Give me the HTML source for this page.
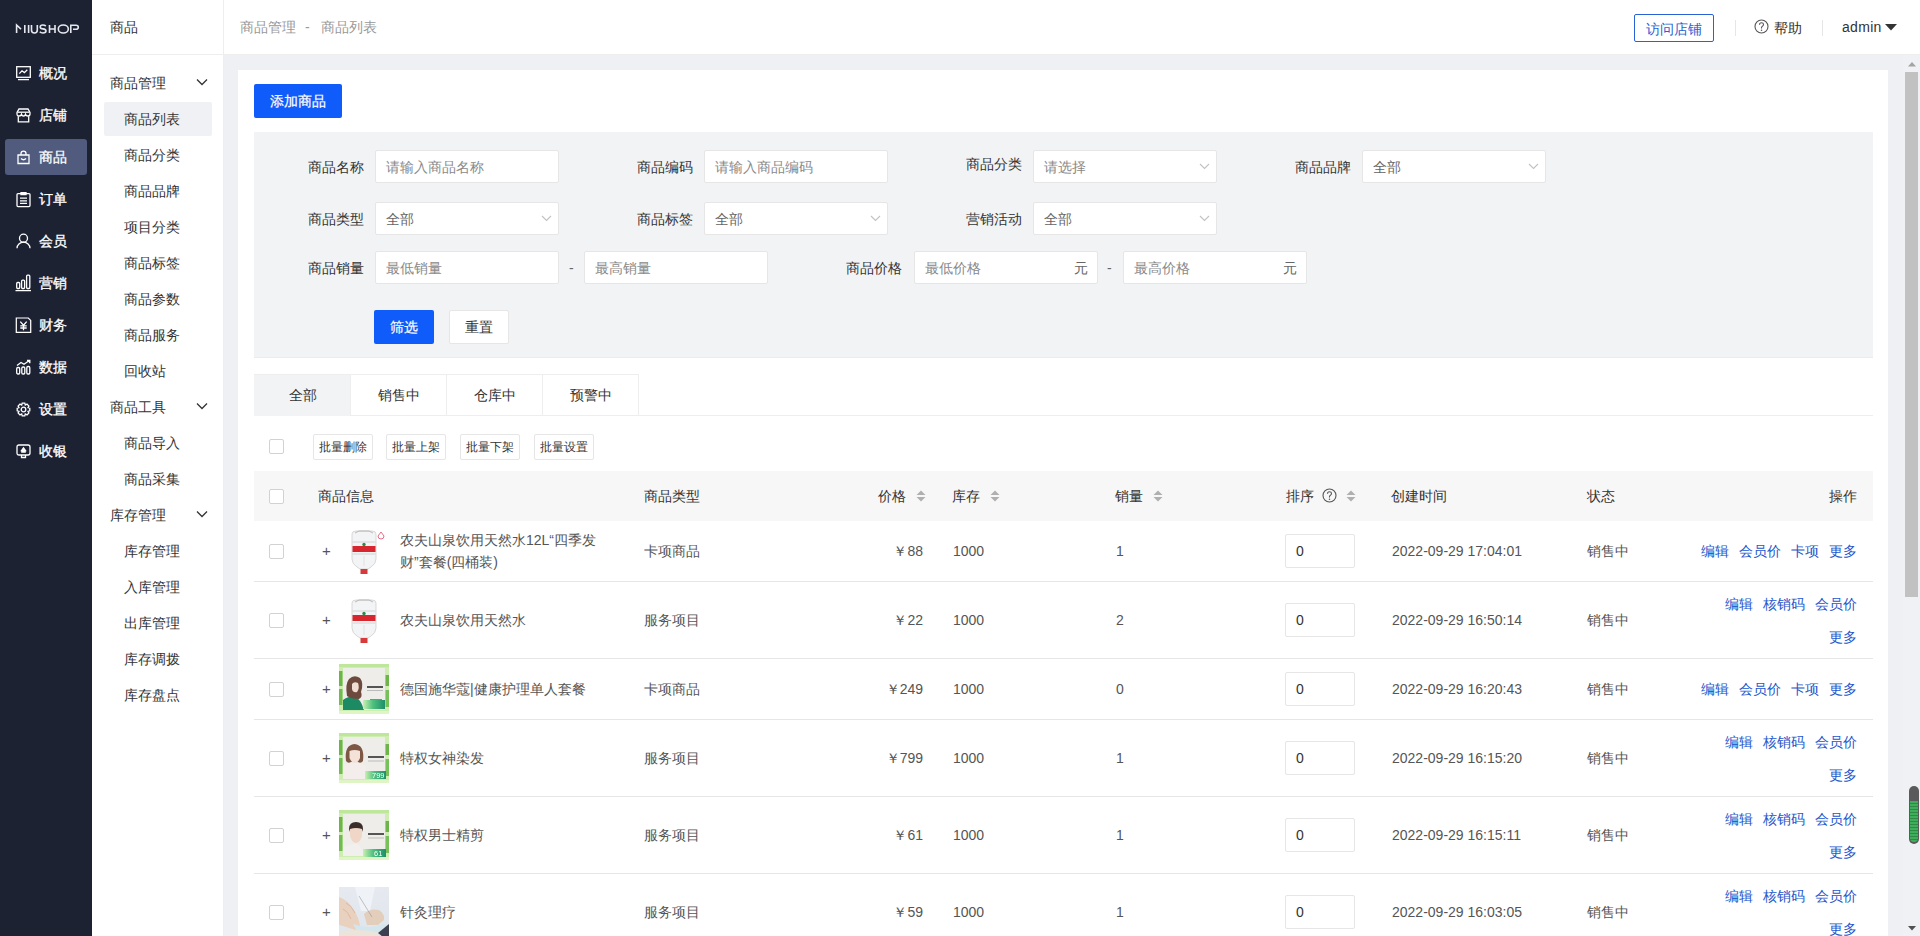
<!DOCTYPE html><html><head><meta charset="utf-8"><style>
html,body{margin:0;padding:0;width:1920px;height:936px;overflow:hidden;background:#fff;font-family:"Liberation Sans",sans-serif;}
.t{position:absolute;white-space:nowrap;}
.b{position:absolute;box-sizing:border-box;}
svg{position:absolute;overflow:visible;}
</style></head><body>
<div class="b" style="left:0px;top:0px;width:92px;height:936px;background:#1d2233"></div>
<svg style="left:15px;top:24px" width="64" height="10" viewBox="0 0 64 10"><g fill="none" stroke="#e6e8ef" stroke-width="1.6"><path d="M1.6 9V1L6 5.2"/><path d="M9.8 1V9"/><path d="M13.6 1V9"/><path d="M16.5 1V6Q16.5 9 19.4 9Q22.3 9 22.3 6V1"/><path d="M30.8 2.1Q29.8 1 27.8 1Q25.2 1 25.2 2.9Q25.2 4.6 28 4.9Q31 5.3 31 7.1Q31 9 28 9Q25.8 9 24.8 7.8"/><path d="M34.5 1V9M34.5 5H40M40 1V9"/><ellipse cx="48.3" cy="5" rx="5" ry="4"/><path d="M55.8 9V1.3H61Q63.3 1.3 63.3 3.3Q63.3 5.3 61 5.3H58"/></g></svg>
<div class="t " style="left:39px;top:63px;font-size:14px;line-height:20px;color:#fff;-webkit-text-stroke:0.3px #fff">概况</div>
<div class="t " style="left:39px;top:105px;font-size:14px;line-height:20px;color:#fff;-webkit-text-stroke:0.3px #fff">店铺</div>
<div class="b" style="left:5px;top:139px;width:82px;height:36px;background:#505b7e;border-radius:3px"></div>
<div class="t " style="left:39px;top:147px;font-size:14px;line-height:20px;color:#fff;-webkit-text-stroke:0.3px #fff">商品</div>
<div class="t " style="left:39px;top:189px;font-size:14px;line-height:20px;color:#fff;-webkit-text-stroke:0.3px #fff">订单</div>
<div class="t " style="left:39px;top:231px;font-size:14px;line-height:20px;color:#fff;-webkit-text-stroke:0.3px #fff">会员</div>
<div class="t " style="left:39px;top:273px;font-size:14px;line-height:20px;color:#fff;-webkit-text-stroke:0.3px #fff">营销</div>
<div class="t " style="left:39px;top:315px;font-size:14px;line-height:20px;color:#fff;-webkit-text-stroke:0.3px #fff">财务</div>
<div class="t " style="left:39px;top:357px;font-size:14px;line-height:20px;color:#fff;-webkit-text-stroke:0.3px #fff">数据</div>
<div class="t " style="left:39px;top:399px;font-size:14px;line-height:20px;color:#fff;-webkit-text-stroke:0.3px #fff">设置</div>
<div class="t " style="left:39px;top:441px;font-size:14px;line-height:20px;color:#fff;-webkit-text-stroke:0.3px #fff">收银</div>
<svg style="left:16px;top:66px" width="15" height="15" viewBox="0 0 15 15"><g fill="none" stroke="#fff" stroke-width="1.3"><rect x="0.7" y="0.7" width="13.6" height="10.6"/><path d="M3.3 7.6L6 4.8L8.4 6.6L11.3 3.8"/><path d="M2 13.6H13"/></g></svg>
<svg style="left:16px;top:108px" width="15" height="15" viewBox="0 0 15 15"><g fill="none" stroke="#fff" stroke-width="1.3"><path d="M3 1H12L14 4.5V6Q14 8 12 8Q10 8 9.5 6.3Q9 8 7.5 8Q6 8 5.5 6.3Q5 8 3 8Q1 8 1 6V4.5Z"/><path d="M2.3 8.2V13.8H12.7V8.2"/><path d="M1.5 4.2H13.5"/></g></svg>
<svg style="left:16px;top:150px" width="15" height="15" viewBox="0 0 15 15"><g fill="none" stroke="#fff" stroke-width="1.3"><path d="M2 5H13V13.5H2Z"/><path d="M5 5V3.5Q5 1.2 7.5 1.2Q10 1.2 10 3.5V5"/><path d="M5 8.5Q7.5 11 10 8.5"/></g></svg>
<svg style="left:16px;top:192px" width="15" height="15" viewBox="0 0 15 15"><g fill="none" stroke="#fff" stroke-width="1.3"><rect x="1" y="1.6" width="13" height="13" rx="1"/><path d="M5 0.6H10V2.6H5Z M4 6.2H11M4 8.8H11M4 11.4H11"/></g></svg>
<svg style="left:16px;top:234px" width="15" height="15" viewBox="0 0 15 15"><g fill="none" stroke="#fff" stroke-width="1.3"><circle cx="7.5" cy="4.2" r="4"/><path d="M1 14.2A6.5 6 0 0 1 14 14.2"/></g></svg>
<svg style="left:16px;top:276px" width="15" height="15" viewBox="0 0 15 15"><g fill="none" stroke="#fff" stroke-width="1.3"><rect x="0.7" y="6.5" width="3" height="6" rx="1"/><rect x="5.6" y="4.2" width="3" height="8.3" rx="1"/><rect x="10.6" y="-0.8" width="3.2" height="13.3" rx="1"/><path d="M-0.5 14.6H15"/></g></svg>
<svg style="left:16px;top:318px" width="15" height="15" viewBox="0 0 15 15"><g fill="none" stroke="#fff" stroke-width="1.3"><path d="M0 0H12.5L15 2.5V15H0Z" transform="translate(0.3 0) scale(0.96)"/><path d="M4.3 3.6L7.5 7.2L10.7 3.6M7.5 7.2V12.2M4.3 7.8H10.7M4.3 10H10.7"/></g></svg>
<svg style="left:16px;top:360px" width="15" height="15" viewBox="0 0 15 15"><g fill="none" stroke="#fff" stroke-width="1.3"><rect x="0.7" y="7.5" width="3" height="6.5" rx="1.2"/><rect x="5.8" y="7" width="3" height="7" rx="1.2"/><rect x="10.8" y="6.5" width="3" height="7.5" rx="1.2"/><path d="M1 5.5L5 2.5L8 4.3L13 0.8"/><path d="M11 0.5H13.8V3.3" fill="#fff"/></g></svg>
<svg style="left:16px;top:402px" width="15" height="15" viewBox="0 0 15 15"><g fill="none" stroke="#fff" stroke-width="1.3"><circle cx="7.5" cy="7.5" r="2.3"/><path d="M6.2 1.2H8.8L9.3 3L11 2.1L12.9 4L12 5.7L13.8 6.2V8.8L12 9.3L12.9 11L11 12.9L9.3 12L8.8 13.8H6.2L5.7 12L4 12.9L2.1 11L3 9.3L1.2 8.8V6.2L3 5.7L2.1 4L4 2.1L5.7 3Z"/></g></svg>
<svg style="left:16px;top:444px" width="15" height="15" viewBox="0 0 15 15"><g fill="none" stroke="#fff" stroke-width="1.3"><path d="M3 1H12Q14 1 14 3V9Q14 11 12 11H3Q1 11 1 9V3Q1 1 3 1Z"/><path d="M5.5 11V13.5H9.5V11"/><path d="M5.2 8H9.8M7.5 3.8L5.5 6.5H9.5Z" fill="#fff"/></g></svg>
<div class="b" style="left:92px;top:0px;width:132px;height:936px;background:#fff;border-right:1px solid #eee"></div>
<div class="t " style="left:110px;top:17px;font-size:14px;line-height:20px;color:#333;">商品</div>
<div class="b" style="left:92px;top:54px;width:132px;height:1px;background:#eee"></div>
<div class="t " style="left:110px;top:73px;font-size:14px;line-height:20px;color:#333;">商品管理</div>
<svg style="left:196px;top:78px" width="12" height="8" viewBox="0 0 12 8"><path d="M1 1.5L6 6.5L11 1.5" fill="none" stroke="#333" stroke-width="1.3"/></svg>
<div class="b" style="left:104px;top:102px;width:108px;height:34px;background:#f0f1f4;border-radius:2px"></div>
<div class="t " style="left:124px;top:109px;font-size:14px;line-height:20px;color:#333;">商品列表</div>
<div class="t " style="left:124px;top:145px;font-size:14px;line-height:20px;color:#333;">商品分类</div>
<div class="t " style="left:124px;top:181px;font-size:14px;line-height:20px;color:#333;">商品品牌</div>
<div class="t " style="left:124px;top:217px;font-size:14px;line-height:20px;color:#333;">项目分类</div>
<div class="t " style="left:124px;top:253px;font-size:14px;line-height:20px;color:#333;">商品标签</div>
<div class="t " style="left:124px;top:289px;font-size:14px;line-height:20px;color:#333;">商品参数</div>
<div class="t " style="left:124px;top:325px;font-size:14px;line-height:20px;color:#333;">商品服务</div>
<div class="t " style="left:124px;top:361px;font-size:14px;line-height:20px;color:#333;">回收站</div>
<div class="t " style="left:110px;top:397px;font-size:14px;line-height:20px;color:#333;">商品工具</div>
<svg style="left:196px;top:402px" width="12" height="8" viewBox="0 0 12 8"><path d="M1 1.5L6 6.5L11 1.5" fill="none" stroke="#333" stroke-width="1.3"/></svg>
<div class="t " style="left:124px;top:433px;font-size:14px;line-height:20px;color:#333;">商品导入</div>
<div class="t " style="left:124px;top:469px;font-size:14px;line-height:20px;color:#333;">商品采集</div>
<div class="t " style="left:110px;top:505px;font-size:14px;line-height:20px;color:#333;">库存管理</div>
<svg style="left:196px;top:510px" width="12" height="8" viewBox="0 0 12 8"><path d="M1 1.5L6 6.5L11 1.5" fill="none" stroke="#333" stroke-width="1.3"/></svg>
<div class="t " style="left:124px;top:541px;font-size:14px;line-height:20px;color:#333;">库存管理</div>
<div class="t " style="left:124px;top:577px;font-size:14px;line-height:20px;color:#333;">入库管理</div>
<div class="t " style="left:124px;top:613px;font-size:14px;line-height:20px;color:#333;">出库管理</div>
<div class="t " style="left:124px;top:649px;font-size:14px;line-height:20px;color:#333;">库存调拨</div>
<div class="t " style="left:124px;top:685px;font-size:14px;line-height:20px;color:#333;">库存盘点</div>
<div class="b" style="left:224px;top:0px;width:1696px;height:54px;background:#fff"></div>
<div class="b" style="left:224px;top:54px;width:1696px;height:1px;background:#eee"></div>
<div class="t " style="left:240px;top:17px;font-size:14px;line-height:20px;color:#999;">商品管理</div>
<div class="t " style="left:305px;top:17px;font-size:14px;line-height:20px;color:#999;">-</div>
<div class="t " style="left:321px;top:17px;font-size:14px;line-height:20px;color:#999;">商品列表</div>
<div class="b" style="left:1634px;top:14px;width:80px;height:28px;border:1px solid #2a62d6;border-radius:2px"></div>
<div class="t " style="left:1646px;top:19px;font-size:14px;line-height:20px;color:#2a5fd0;">访问店铺</div>
<div class="b" style="left:1735px;top:20px;width:1px;height:16px;background:#e6e6e6"></div>
<svg style="left:1754px;top:19px" width="15" height="15" viewBox="0 0 15 15"><circle cx="7.5" cy="7.5" r="6.5" fill="none" stroke="#555" stroke-width="1.1"/><path d="M5.5 5.8Q5.5 3.8 7.5 3.8Q9.5 3.8 9.5 5.6Q9.5 6.8 8.2 7.4Q7.5 7.8 7.5 8.8V9.5" fill="none" stroke="#555" stroke-width="1.1"/><circle cx="7.5" cy="11.2" r="0.75" fill="#555"/></svg>
<div class="t " style="left:1774px;top:18px;font-size:14px;line-height:20px;color:#333;">帮助</div>
<div class="b" style="left:1822px;top:20px;width:1px;height:16px;background:#e6e6e6"></div>
<div class="t " style="left:1842px;top:17px;font-size:14px;line-height:20px;color:#333;letter-spacing:0.3px">admin</div>
<svg style="left:1885px;top:24px" width="12" height="7" viewBox="0 0 12 7"><path d="M0 0H12L6 6.5Z" fill="#333"/></svg>
<div class="b" style="left:224px;top:55px;width:1696px;height:881px;background:#eff0f4"></div>
<div class="b" style="left:238px;top:70px;width:1650px;height:866px;background:#fff"></div>
<div class="b" style="left:1903px;top:55px;width:17px;height:881px;background:#f0f1f4"></div>
<div class="b" style="left:1905px;top:72px;width:13px;height:525px;background:#c1c1c1"></div>
<svg style="left:1908px;top:62px" width="8" height="5" viewBox="0 0 8 5"><path d="M0 4.5H8L4 0Z" fill="#a3a3a3"/></svg>
<svg style="left:1908px;top:926px" width="8" height="5" viewBox="0 0 8 5"><path d="M0 0H8L4 4.5Z" fill="#505050"/></svg>
<div class="b" style="left:1909px;top:786px;width:10px;height:58px;background:#5a5a5a;border-radius:5px"></div>
<div class="b" style="left:1910px;top:801px;width:8px;height:41px;background:repeating-linear-gradient(#3fae5a 0 2px,#2f8a45 2px 3px);border-radius:0 0 4px 4px"></div>
<div class="b" style="left:254px;top:84px;width:88px;height:34px;background:#105cfb;border-radius:2px"></div>
<div class="t " style="left:270px;top:91px;font-size:14px;line-height:20px;color:#fff;-webkit-text-stroke:0.2px #fff">添加商品</div>
<div class="b" style="left:254px;top:132px;width:1619px;height:226px;background:#f2f3f5;border-bottom:1px solid #ebecef"></div>
<div class="t " style="left:308px;top:157px;font-size:14px;line-height:20px;color:#333;">商品名称</div>
<div class="b" style="left:375px;top:150px;width:184px;height:33px;background:#fff;border:1px solid #e6e6e6;border-radius:2px"></div>
<div class="t " style="left:386px;top:157px;font-size:14px;line-height:20px;color:#8a8a8a;">请输入商品名称</div>
<div class="t " style="left:637px;top:157px;font-size:14px;line-height:20px;color:#333;">商品编码</div>
<div class="b" style="left:704px;top:150px;width:184px;height:33px;background:#fff;border:1px solid #e6e6e6;border-radius:2px"></div>
<div class="t " style="left:715px;top:157px;font-size:14px;line-height:20px;color:#8a8a8a;">请输入商品编码</div>
<div class="t " style="left:966px;top:154px;font-size:14px;line-height:20px;color:#333;">商品分类</div>
<div class="b" style="left:1033px;top:150px;width:184px;height:33px;background:#fff;border:1px solid #e6e6e6;border-radius:2px"></div>
<div class="t " style="left:1044px;top:157px;font-size:14px;line-height:20px;color:#8a8a8a;">请选择</div>
<svg style="left:1199px;top:163px" width="11" height="7" viewBox="0 0 11 7"><path d="M1 1L5.5 5.5L10 1" fill="none" stroke="#c2c2c2" stroke-width="1.1"/></svg>
<div class="t " style="left:1295px;top:157px;font-size:14px;line-height:20px;color:#333;">商品品牌</div>
<div class="b" style="left:1362px;top:150px;width:184px;height:33px;background:#fff;border:1px solid #e6e6e6;border-radius:2px"></div>
<div class="t " style="left:1373px;top:157px;font-size:14px;line-height:20px;color:#666;">全部</div>
<svg style="left:1528px;top:163px" width="11" height="7" viewBox="0 0 11 7"><path d="M1 1L5.5 5.5L10 1" fill="none" stroke="#c2c2c2" stroke-width="1.1"/></svg>
<div class="t " style="left:308px;top:209px;font-size:14px;line-height:20px;color:#333;">商品类型</div>
<div class="b" style="left:375px;top:202px;width:184px;height:33px;background:#fff;border:1px solid #e6e6e6;border-radius:2px"></div>
<div class="t " style="left:386px;top:209px;font-size:14px;line-height:20px;color:#666;">全部</div>
<svg style="left:541px;top:215px" width="11" height="7" viewBox="0 0 11 7"><path d="M1 1L5.5 5.5L10 1" fill="none" stroke="#c2c2c2" stroke-width="1.1"/></svg>
<div class="t " style="left:637px;top:209px;font-size:14px;line-height:20px;color:#333;">商品标签</div>
<div class="b" style="left:704px;top:202px;width:184px;height:33px;background:#fff;border:1px solid #e6e6e6;border-radius:2px"></div>
<div class="t " style="left:715px;top:209px;font-size:14px;line-height:20px;color:#666;">全部</div>
<svg style="left:870px;top:215px" width="11" height="7" viewBox="0 0 11 7"><path d="M1 1L5.5 5.5L10 1" fill="none" stroke="#c2c2c2" stroke-width="1.1"/></svg>
<div class="t " style="left:966px;top:209px;font-size:14px;line-height:20px;color:#333;">营销活动</div>
<div class="b" style="left:1033px;top:202px;width:184px;height:33px;background:#fff;border:1px solid #e6e6e6;border-radius:2px"></div>
<div class="t " style="left:1044px;top:209px;font-size:14px;line-height:20px;color:#666;">全部</div>
<svg style="left:1199px;top:215px" width="11" height="7" viewBox="0 0 11 7"><path d="M1 1L5.5 5.5L10 1" fill="none" stroke="#c2c2c2" stroke-width="1.1"/></svg>
<div class="t " style="left:308px;top:258px;font-size:14px;line-height:20px;color:#333;">商品销量</div>
<div class="b" style="left:375px;top:251px;width:184px;height:33px;background:#fff;border:1px solid #e6e6e6;border-radius:2px"></div>
<div class="t " style="left:386px;top:258px;font-size:14px;line-height:20px;color:#8a8a8a;">最低销量</div>
<div class="t " style="left:569px;top:258px;font-size:14px;line-height:20px;color:#666;">-</div>
<div class="b" style="left:584px;top:251px;width:184px;height:33px;background:#fff;border:1px solid #e6e6e6;border-radius:2px"></div>
<div class="t " style="left:595px;top:258px;font-size:14px;line-height:20px;color:#8a8a8a;">最高销量</div>
<div class="t " style="left:846px;top:258px;font-size:14px;line-height:20px;color:#333;">商品价格</div>
<div class="b" style="left:914px;top:251px;width:184px;height:33px;background:#fff;border:1px solid #e6e6e6;border-radius:2px"></div>
<div class="t " style="left:925px;top:258px;font-size:14px;line-height:20px;color:#8a8a8a;">最低价格</div>
<div class="t " style="left:1074px;top:258px;font-size:14px;line-height:20px;color:#666;">元</div>
<div class="t " style="left:1107px;top:258px;font-size:14px;line-height:20px;color:#666;">-</div>
<div class="b" style="left:1123px;top:251px;width:184px;height:33px;background:#fff;border:1px solid #e6e6e6;border-radius:2px"></div>
<div class="t " style="left:1134px;top:258px;font-size:14px;line-height:20px;color:#8a8a8a;">最高价格</div>
<div class="t " style="left:1283px;top:258px;font-size:14px;line-height:20px;color:#666;">元</div>
<div class="b" style="left:374px;top:310px;width:60px;height:34px;background:#105cfb;border-radius:2px"></div>
<div class="t " style="left:390px;top:317px;font-size:14px;line-height:20px;color:#fff;-webkit-text-stroke:0.2px #fff">筛选</div>
<div class="b" style="left:449px;top:310px;width:60px;height:34px;background:#fff;border:1px solid #e6e6e6;border-radius:2px"></div>
<div class="t " style="left:465px;top:317px;font-size:14px;line-height:20px;color:#333;">重置</div>
<div class="b" style="left:254px;top:415px;width:1619px;height:1px;background:#eee"></div>
<div class="b" style="left:254px;top:374px;width:385px;height:1px;background:#eee"></div>
<div class="b" style="left:254px;top:375px;width:96px;height:41px;background:#f2f3f5"></div>
<div class="b" style="left:350px;top:374px;width:1px;height:41px;background:#eee"></div>
<div class="b" style="left:446px;top:374px;width:1px;height:41px;background:#eee"></div>
<div class="b" style="left:542px;top:374px;width:1px;height:41px;background:#eee"></div>
<div class="b" style="left:638px;top:374px;width:1px;height:41px;background:#eee"></div>
<div class="t " style="left:289px;top:385px;font-size:14px;line-height:20px;color:#333;">全部</div>
<div class="t " style="left:378px;top:385px;font-size:14px;line-height:20px;color:#333;">销售中</div>
<div class="t " style="left:474px;top:385px;font-size:14px;line-height:20px;color:#333;">仓库中</div>
<div class="t " style="left:570px;top:385px;font-size:14px;line-height:20px;color:#333;">预警中</div>
<div class="b" style="left:269px;top:439px;width:15px;height:15px;background:#fff;border:1px solid #d2d2d2;border-radius:2px"></div>
<div class="b" style="left:313px;top:434px;width:60px;height:26px;background:#fff;border:1px solid #e6e6e6;border-radius:2px"></div>
<div class="t " style="left:319px;top:437px;font-size:12px;line-height:20px;color:#333;">批量删除</div>
<div class="b" style="left:386px;top:434px;width:60px;height:26px;background:#fff;border:1px solid #e6e6e6;border-radius:2px"></div>
<div class="t " style="left:392px;top:437px;font-size:12px;line-height:20px;color:#333;">批量上架</div>
<div class="b" style="left:460px;top:434px;width:60px;height:26px;background:#fff;border:1px solid #e6e6e6;border-radius:2px"></div>
<div class="t " style="left:466px;top:437px;font-size:12px;line-height:20px;color:#333;">批量下架</div>
<div class="b" style="left:534px;top:434px;width:60px;height:26px;background:#fff;border:1px solid #e6e6e6;border-radius:2px"></div>
<div class="t " style="left:540px;top:437px;font-size:12px;line-height:20px;color:#333;">批量设置</div>
<div class="b" style="left:254px;top:471px;width:1619px;height:50px;background:#f7f7f7"></div>
<div class="b" style="left:269px;top:489px;width:15px;height:15px;background:#fff;border:1px solid #d2d2d2;border-radius:2px"></div>
<div class="t " style="left:318px;top:486px;font-size:14px;line-height:20px;color:#333;">商品信息</div>
<div class="t " style="left:644px;top:486px;font-size:14px;line-height:20px;color:#333;">商品类型</div>
<div class="t " style="left:878px;top:486px;font-size:14px;line-height:20px;color:#333;">价格</div>
<svg style="left:916px;top:490px" width="10" height="12" viewBox="0 0 10 12"><path d="M5 0.5L9.5 5H0.5Z M5 11.5L9.5 7H0.5Z" fill="#b0b0b0"/></svg>
<div class="t " style="left:952px;top:486px;font-size:14px;line-height:20px;color:#333;">库存</div>
<svg style="left:990px;top:490px" width="10" height="12" viewBox="0 0 10 12"><path d="M5 0.5L9.5 5H0.5Z M5 11.5L9.5 7H0.5Z" fill="#b0b0b0"/></svg>
<div class="t " style="left:1115px;top:486px;font-size:14px;line-height:20px;color:#333;">销量</div>
<svg style="left:1153px;top:490px" width="10" height="12" viewBox="0 0 10 12"><path d="M5 0.5L9.5 5H0.5Z M5 11.5L9.5 7H0.5Z" fill="#b0b0b0"/></svg>
<div class="t " style="left:1286px;top:486px;font-size:14px;line-height:20px;color:#333;">排序</div>
<svg style="left:1322px;top:488px" width="15" height="15" viewBox="0 0 15 15"><circle cx="7.5" cy="7.5" r="6.5" fill="none" stroke="#555" stroke-width="1.1"/><path d="M5.5 5.8Q5.5 3.8 7.5 3.8Q9.5 3.8 9.5 5.6Q9.5 6.8 8.2 7.4Q7.5 7.8 7.5 8.8V9.5" fill="none" stroke="#555" stroke-width="1.1"/><circle cx="7.5" cy="11.2" r="0.75" fill="#555"/></svg>
<svg style="left:1346px;top:490px" width="10" height="12" viewBox="0 0 10 12"><path d="M5 0.5L9.5 5H0.5Z M5 11.5L9.5 7H0.5Z" fill="#b0b0b0"/></svg>
<div class="t " style="left:1391px;top:486px;font-size:14px;line-height:20px;color:#333;">创建时间</div>
<div class="t " style="left:1587px;top:486px;font-size:14px;line-height:20px;color:#333;">状态</div>
<div class="t" style="right:63px;top:486px;font-size:14px;line-height:20px;color:#333;">操作</div>
<div class="b" style="left:254px;top:581px;width:1619px;height:1px;background:#e6e6e6"></div>
<div class="b" style="left:269px;top:544px;width:15px;height:15px;background:#fff;border:1px solid #d2d2d2;border-radius:2px"></div>
<div class="t " style="left:322px;top:541px;font-size:15px;line-height:20px;color:#555;">+</div>
<svg style="left:339px;top:526px" width="50" height="50" viewBox="0 0 50 50"><path d="M13 8Q13 5 17 5H33Q37 5 37 8V33Q37 38 32 41L29 43H21L18 41Q13 38 13 33Z" fill="#f3f4f5" stroke="#cfcfcf" stroke-width="0.8"/><path d="M16 7L20 5H30L34 7" fill="none" stroke="#aaa" stroke-width="0.8"/><rect x="13.5" y="20" width="23" height="6" fill="#d8262f"/><circle cx="25" cy="18.5" r="1.7" fill="#2a8a4a"/><rect x="21.5" y="43" width="7" height="5" fill="#d63a3a"/><path d="M13.5 16H36.5M13.5 28H36.5" stroke="#ccc" stroke-width="0.8"/><path d="M25 30V40" stroke="#ddd" stroke-width="0.8"/><path d="M42 6L45 10Q45 13 42 13Q39 13 39 10Z" fill="none" stroke="#e35a7a" stroke-width="0.9"/></svg>
<div class="t " style="left:400px;top:530px;font-size:14px;line-height:20px;color:#555;">农夫山泉饮用天然水12L“四季发</div>
<div class="t " style="left:400px;top:552px;font-size:14px;line-height:20px;color:#555;">财”套餐(四桶装)</div>
<div class="t " style="left:644px;top:541px;font-size:14px;line-height:20px;color:#555;">卡项商品</div>
<div class="t" style="right:997px;top:541px;font-size:14px;line-height:20px;color:#555;">￥88</div>
<div class="t " style="left:953px;top:541px;font-size:14px;line-height:20px;color:#555;">1000</div>
<div class="t " style="left:1116px;top:541px;font-size:14px;line-height:20px;color:#555;">1</div>
<div class="b" style="left:1285px;top:534px;width:70px;height:34px;background:#fff;border:1px solid #e6e6e6;border-radius:2px"></div>
<div class="t " style="left:1296px;top:541px;font-size:14px;line-height:20px;color:#333;">0</div>
<div class="t " style="left:1392px;top:541px;font-size:14px;line-height:20px;color:#555;">2022-09-29 17:04:01</div>
<div class="t " style="left:1587px;top:541px;font-size:14px;line-height:20px;color:#555;">销售中</div>
<div class="t" style="right:63px;top:541px;font-size:14px;line-height:20px;color:#2456cc;"><span style="margin-left:10px">编辑</span><span style="margin-left:10px">会员价</span><span style="margin-left:10px">卡项</span><span style="margin-left:10px">更多</span></div>
<div class="b" style="left:254px;top:658px;width:1619px;height:1px;background:#e6e6e6"></div>
<div class="b" style="left:269px;top:613px;width:15px;height:15px;background:#fff;border:1px solid #d2d2d2;border-radius:2px"></div>
<div class="t " style="left:322px;top:610px;font-size:15px;line-height:20px;color:#555;">+</div>
<svg style="left:339px;top:595px" width="50" height="50" viewBox="0 0 50 50"><path d="M13 8Q13 5 17 5H33Q37 5 37 8V33Q37 38 32 41L29 43H21L18 41Q13 38 13 33Z" fill="#f3f4f5" stroke="#cfcfcf" stroke-width="0.8"/><path d="M16 7L20 5H30L34 7" fill="none" stroke="#aaa" stroke-width="0.8"/><rect x="13.5" y="20" width="23" height="6" fill="#d8262f"/><circle cx="25" cy="18.5" r="1.7" fill="#2a8a4a"/><rect x="21.5" y="43" width="7" height="5" fill="#d63a3a"/><path d="M13.5 16H36.5M13.5 28H36.5" stroke="#ccc" stroke-width="0.8"/><path d="M25 30V40" stroke="#ddd" stroke-width="0.8"/></svg>
<div class="t " style="left:400px;top:610px;font-size:14px;line-height:20px;color:#555;">农夫山泉饮用天然水</div>
<div class="t " style="left:644px;top:610px;font-size:14px;line-height:20px;color:#555;">服务项目</div>
<div class="t" style="right:997px;top:610px;font-size:14px;line-height:20px;color:#555;">￥22</div>
<div class="t " style="left:953px;top:610px;font-size:14px;line-height:20px;color:#555;">1000</div>
<div class="t " style="left:1116px;top:610px;font-size:14px;line-height:20px;color:#555;">2</div>
<div class="b" style="left:1285px;top:603px;width:70px;height:34px;background:#fff;border:1px solid #e6e6e6;border-radius:2px"></div>
<div class="t " style="left:1296px;top:610px;font-size:14px;line-height:20px;color:#333;">0</div>
<div class="t " style="left:1392px;top:610px;font-size:14px;line-height:20px;color:#555;">2022-09-29 16:50:14</div>
<div class="t " style="left:1587px;top:610px;font-size:14px;line-height:20px;color:#555;">销售中</div>
<div class="t" style="right:63px;top:594px;font-size:14px;line-height:20px;color:#2456cc;"><span style="margin-left:10px">编辑</span><span style="margin-left:10px">核销码</span><span style="margin-left:10px">会员价</span></div>
<div class="t" style="right:63px;top:627px;font-size:14px;line-height:20px;color:#2456cc;">更多</div>
<div class="b" style="left:254px;top:719px;width:1619px;height:1px;background:#e6e6e6"></div>
<div class="b" style="left:269px;top:682px;width:15px;height:15px;background:#fff;border:1px solid #d2d2d2;border-radius:2px"></div>
<div class="t " style="left:322px;top:679px;font-size:15px;line-height:20px;color:#555;">+</div>
<svg style="left:339px;top:664px" width="50" height="50" viewBox="0 0 50 50"><defs><linearGradient id="tagw1" x1="0" x2="1"><stop offset="0" stop-color="#c9f0b0"/><stop offset="0.45" stop-color="#4cc07e"/><stop offset="1" stop-color="#1f8f6a"/></linearGradient><filter id="gbw1"><feGaussianBlur stdDeviation="0.4"/></filter></defs><g filter="url(#gbw1)"><rect x="0" y="0" width="50" height="50" fill="#cdeeb0"/><rect x="0" y="0" width="50" height="3" fill="#bfe79b"/><rect x="0" y="47" width="50" height="3" fill="#dff5c6"/><rect x="4" y="4" width="42" height="42" fill="#efedea"/><rect x="0" y="7" width="3.5" height="15" fill="#6db54a"/><rect x="0" y="25" width="3.5" height="16" fill="#72bb52"/><rect x="46.5" y="11" width="3.5" height="11" fill="#6db54a"/><rect x="46.5" y="26" width="3.5" height="17" fill="#78c05a"/><path d="M4 46V36Q10 31 17 33Q22 36 25 46Z" fill="#1f8a62"/><path d="M8 32Q6 20 10 15Q15 10 21 14Q25 19 22 28Q24 33 20 35Q12 35 8 32Z" fill="#6e4a3c"/><path d="M13 20Q15 17 19 19Q21 24 18 28Q14 29 13 25Z" fill="#f1ddd2"/><rect x="28" y="22" width="16" height="2" fill="#555"/><rect x="28" y="26" width="16" height="1" fill="#bbb"/><rect x="31" y="35" width="12" height="1" fill="#888"/><rect x="24" y="36" width="22" height="9" fill="url(#tagw1)"/></g></svg>
<div class="t " style="left:400px;top:679px;font-size:14px;line-height:20px;color:#555;">德国施华蔻|健康护理单人套餐</div>
<div class="t " style="left:644px;top:679px;font-size:14px;line-height:20px;color:#555;">卡项商品</div>
<div class="t" style="right:997px;top:679px;font-size:14px;line-height:20px;color:#555;">￥249</div>
<div class="t " style="left:953px;top:679px;font-size:14px;line-height:20px;color:#555;">1000</div>
<div class="t " style="left:1116px;top:679px;font-size:14px;line-height:20px;color:#555;">0</div>
<div class="b" style="left:1285px;top:672px;width:70px;height:34px;background:#fff;border:1px solid #e6e6e6;border-radius:2px"></div>
<div class="t " style="left:1296px;top:679px;font-size:14px;line-height:20px;color:#333;">0</div>
<div class="t " style="left:1392px;top:679px;font-size:14px;line-height:20px;color:#555;">2022-09-29 16:20:43</div>
<div class="t " style="left:1587px;top:679px;font-size:14px;line-height:20px;color:#555;">销售中</div>
<div class="t" style="right:63px;top:679px;font-size:14px;line-height:20px;color:#2456cc;"><span style="margin-left:10px">编辑</span><span style="margin-left:10px">会员价</span><span style="margin-left:10px">卡项</span><span style="margin-left:10px">更多</span></div>
<div class="b" style="left:254px;top:796px;width:1619px;height:1px;background:#e6e6e6"></div>
<div class="b" style="left:269px;top:751px;width:15px;height:15px;background:#fff;border:1px solid #d2d2d2;border-radius:2px"></div>
<div class="t " style="left:322px;top:748px;font-size:15px;line-height:20px;color:#555;">+</div>
<svg style="left:339px;top:733px" width="50" height="50" viewBox="0 0 50 50"><defs><linearGradient id="tagw" x1="0" x2="1"><stop offset="0" stop-color="#c9f0b0"/><stop offset="0.45" stop-color="#4cc07e"/><stop offset="1" stop-color="#1f8f6a"/></linearGradient><filter id="gbw"><feGaussianBlur stdDeviation="0.4"/></filter></defs><g filter="url(#gbw)"><rect x="0" y="0" width="50" height="50" fill="#cdeeb0"/><rect x="0" y="0" width="50" height="3" fill="#bfe79b"/><rect x="0" y="47" width="50" height="3" fill="#dff5c6"/><rect x="4" y="4" width="42" height="42" fill="#efedea"/><rect x="0" y="7" width="3.5" height="15" fill="#6db54a"/><rect x="0" y="25" width="3.5" height="16" fill="#72bb52"/><rect x="46.5" y="11" width="3.5" height="11" fill="#6db54a"/><rect x="46.5" y="26" width="3.5" height="17" fill="#78c05a"/><path d="M4 46V34Q8 30 15 30Q22 30 27 34V46Z" fill="#f3eeec"/><path d="M7 28Q5 12 15.5 11Q26 12 24 28Q22 31 19 29H12Q9 31 7 28Z" fill="#7d5844"/><path d="M10.5 18Q15.5 16 21 18V25Q19 30 15.7 30Q12.5 30 10.5 25Z" fill="#f4e1d8"/><rect x="29" y="23" width="16" height="2" fill="#555"/><rect x="29" y="27.5" width="16" height="1" fill="#bbb"/><rect x="26" y="38" width="21" height="8" fill="url(#tagw)"/><text x="33" y="45" font-size="7.5" fill="#fff" font-family="Liberation Sans">799</text></g></svg>
<div class="t " style="left:400px;top:748px;font-size:14px;line-height:20px;color:#555;">特权女神染发</div>
<div class="t " style="left:644px;top:748px;font-size:14px;line-height:20px;color:#555;">服务项目</div>
<div class="t" style="right:997px;top:748px;font-size:14px;line-height:20px;color:#555;">￥799</div>
<div class="t " style="left:953px;top:748px;font-size:14px;line-height:20px;color:#555;">1000</div>
<div class="t " style="left:1116px;top:748px;font-size:14px;line-height:20px;color:#555;">1</div>
<div class="b" style="left:1285px;top:741px;width:70px;height:34px;background:#fff;border:1px solid #e6e6e6;border-radius:2px"></div>
<div class="t " style="left:1296px;top:748px;font-size:14px;line-height:20px;color:#333;">0</div>
<div class="t " style="left:1392px;top:748px;font-size:14px;line-height:20px;color:#555;">2022-09-29 16:15:20</div>
<div class="t " style="left:1587px;top:748px;font-size:14px;line-height:20px;color:#555;">销售中</div>
<div class="t" style="right:63px;top:732px;font-size:14px;line-height:20px;color:#2456cc;"><span style="margin-left:10px">编辑</span><span style="margin-left:10px">核销码</span><span style="margin-left:10px">会员价</span></div>
<div class="t" style="right:63px;top:765px;font-size:14px;line-height:20px;color:#2456cc;">更多</div>
<div class="b" style="left:254px;top:873px;width:1619px;height:1px;background:#e6e6e6"></div>
<div class="b" style="left:269px;top:828px;width:15px;height:15px;background:#fff;border:1px solid #d2d2d2;border-radius:2px"></div>
<div class="t " style="left:322px;top:825px;font-size:15px;line-height:20px;color:#555;">+</div>
<svg style="left:339px;top:810px" width="50" height="50" viewBox="0 0 50 50"><defs><linearGradient id="tagm" x1="0" x2="1"><stop offset="0" stop-color="#c9f0b0"/><stop offset="0.45" stop-color="#4cc07e"/><stop offset="1" stop-color="#1f8f6a"/></linearGradient><filter id="gbm"><feGaussianBlur stdDeviation="0.4"/></filter></defs><g filter="url(#gbm)"><rect x="0" y="0" width="50" height="50" fill="#cdeeb0"/><rect x="0" y="0" width="50" height="3" fill="#bfe79b"/><rect x="0" y="47" width="50" height="3" fill="#dff5c6"/><rect x="4" y="4" width="42" height="42" fill="#efedea"/><rect x="0" y="7" width="3.5" height="15" fill="#6db54a"/><rect x="0" y="25" width="3.5" height="16" fill="#72bb52"/><rect x="46.5" y="11" width="3.5" height="11" fill="#6db54a"/><rect x="46.5" y="26" width="3.5" height="17" fill="#78c05a"/><path d="M4 46V38Q10 34 17 34Q22 35 25 46Z" fill="#f2f0ee"/><path d="M10 19Q10 12 17 12Q24 12 24 19L23 22H11Z" fill="#3a2e2a"/><path d="M11 19Q17 17 23 19V26Q21 33 17 33Q13 33 11 26Z" fill="#efd6c6"/><rect x="29" y="23" width="16" height="2" fill="#555"/><rect x="29" y="27.5" width="16" height="1" fill="#bbb"/><rect x="24" y="39" width="23" height="8" fill="url(#tagm)"/><text x="35" y="46" font-size="7.5" fill="#fff" font-family="Liberation Sans">61</text></g></svg>
<div class="t " style="left:400px;top:825px;font-size:14px;line-height:20px;color:#555;">特权男士精剪</div>
<div class="t " style="left:644px;top:825px;font-size:14px;line-height:20px;color:#555;">服务项目</div>
<div class="t" style="right:997px;top:825px;font-size:14px;line-height:20px;color:#555;">￥61</div>
<div class="t " style="left:953px;top:825px;font-size:14px;line-height:20px;color:#555;">1000</div>
<div class="t " style="left:1116px;top:825px;font-size:14px;line-height:20px;color:#555;">1</div>
<div class="b" style="left:1285px;top:818px;width:70px;height:34px;background:#fff;border:1px solid #e6e6e6;border-radius:2px"></div>
<div class="t " style="left:1296px;top:825px;font-size:14px;line-height:20px;color:#333;">0</div>
<div class="t " style="left:1392px;top:825px;font-size:14px;line-height:20px;color:#555;">2022-09-29 16:15:11</div>
<div class="t " style="left:1587px;top:825px;font-size:14px;line-height:20px;color:#555;">销售中</div>
<div class="t" style="right:63px;top:809px;font-size:14px;line-height:20px;color:#2456cc;"><span style="margin-left:10px">编辑</span><span style="margin-left:10px">核销码</span><span style="margin-left:10px">会员价</span></div>
<div class="t" style="right:63px;top:842px;font-size:14px;line-height:20px;color:#2456cc;">更多</div>
<div class="b" style="left:254px;top:950px;width:1619px;height:1px;background:#e6e6e6"></div>
<div class="b" style="left:269px;top:905px;width:15px;height:15px;background:#fff;border:1px solid #d2d2d2;border-radius:2px"></div>
<div class="t " style="left:322px;top:902px;font-size:15px;line-height:20px;color:#555;">+</div>
<svg style="left:339px;top:887px" width="50" height="50" viewBox="0 0 50 50"><defs><linearGradient id="acubg" x1="0" y1="0" x2="0" y2="1"><stop offset="0" stop-color="#e6eaf0"/><stop offset="1" stop-color="#dfe5eb"/></linearGradient><filter id="acublur" x="-5%" y="-5%" width="110%" height="110%"><feGaussianBlur stdDeviation="0.7"/></filter><clipPath id="acuclip"><rect x="0" y="0" width="50" height="50"/></clipPath></defs><g clip-path="url(#acuclip)"><rect x="0" y="0" width="50" height="50" fill="url(#acubg)"/><g filter="url(#acublur)"><path d="M16 0H36L31 24H22Z" fill="#eff2f6"/><path d="M0 10Q9 13 15 23Q20 31 21 39L16 43Q8 40 0 38Z" fill="#e9d1c0"/><path d="M4 22Q9 24 12 32M7 16Q12 18 16 26" stroke="#dcb59c" stroke-width="0.9" fill="none"/><path d="M25 27Q31 21 40 23Q46 27 45 33L39 38H28Z" fill="#e3cdbb"/><path d="M20 9L33 30" stroke="#8a8a8a" stroke-width="0.5"/><path d="M14 37Q30 43 44 37L48 38V45Q30 47 18 44Z" fill="#d3e6ee"/><path d="M0 44Q25 41 40 46L50 43V50H0Z" fill="#ebe4da"/><path d="M39 46L50 37V50H44Z" fill="#3c4050"/></g></g></svg>
<div class="t " style="left:400px;top:902px;font-size:14px;line-height:20px;color:#555;">针灸理疗</div>
<div class="t " style="left:644px;top:902px;font-size:14px;line-height:20px;color:#555;">服务项目</div>
<div class="t" style="right:997px;top:902px;font-size:14px;line-height:20px;color:#555;">￥59</div>
<div class="t " style="left:953px;top:902px;font-size:14px;line-height:20px;color:#555;">1000</div>
<div class="t " style="left:1116px;top:902px;font-size:14px;line-height:20px;color:#555;">1</div>
<div class="b" style="left:1285px;top:895px;width:70px;height:34px;background:#fff;border:1px solid #e6e6e6;border-radius:2px"></div>
<div class="t " style="left:1296px;top:902px;font-size:14px;line-height:20px;color:#333;">0</div>
<div class="t " style="left:1392px;top:902px;font-size:14px;line-height:20px;color:#555;">2022-09-29 16:03:05</div>
<div class="t " style="left:1587px;top:902px;font-size:14px;line-height:20px;color:#555;">销售中</div>
<div class="t" style="right:63px;top:886px;font-size:14px;line-height:20px;color:#2456cc;"><span style="margin-left:10px">编辑</span><span style="margin-left:10px">核销码</span><span style="margin-left:10px">会员价</span></div>
<div class="t" style="right:63px;top:919px;font-size:14px;line-height:20px;color:#2456cc;">更多</div>
</body></html>
